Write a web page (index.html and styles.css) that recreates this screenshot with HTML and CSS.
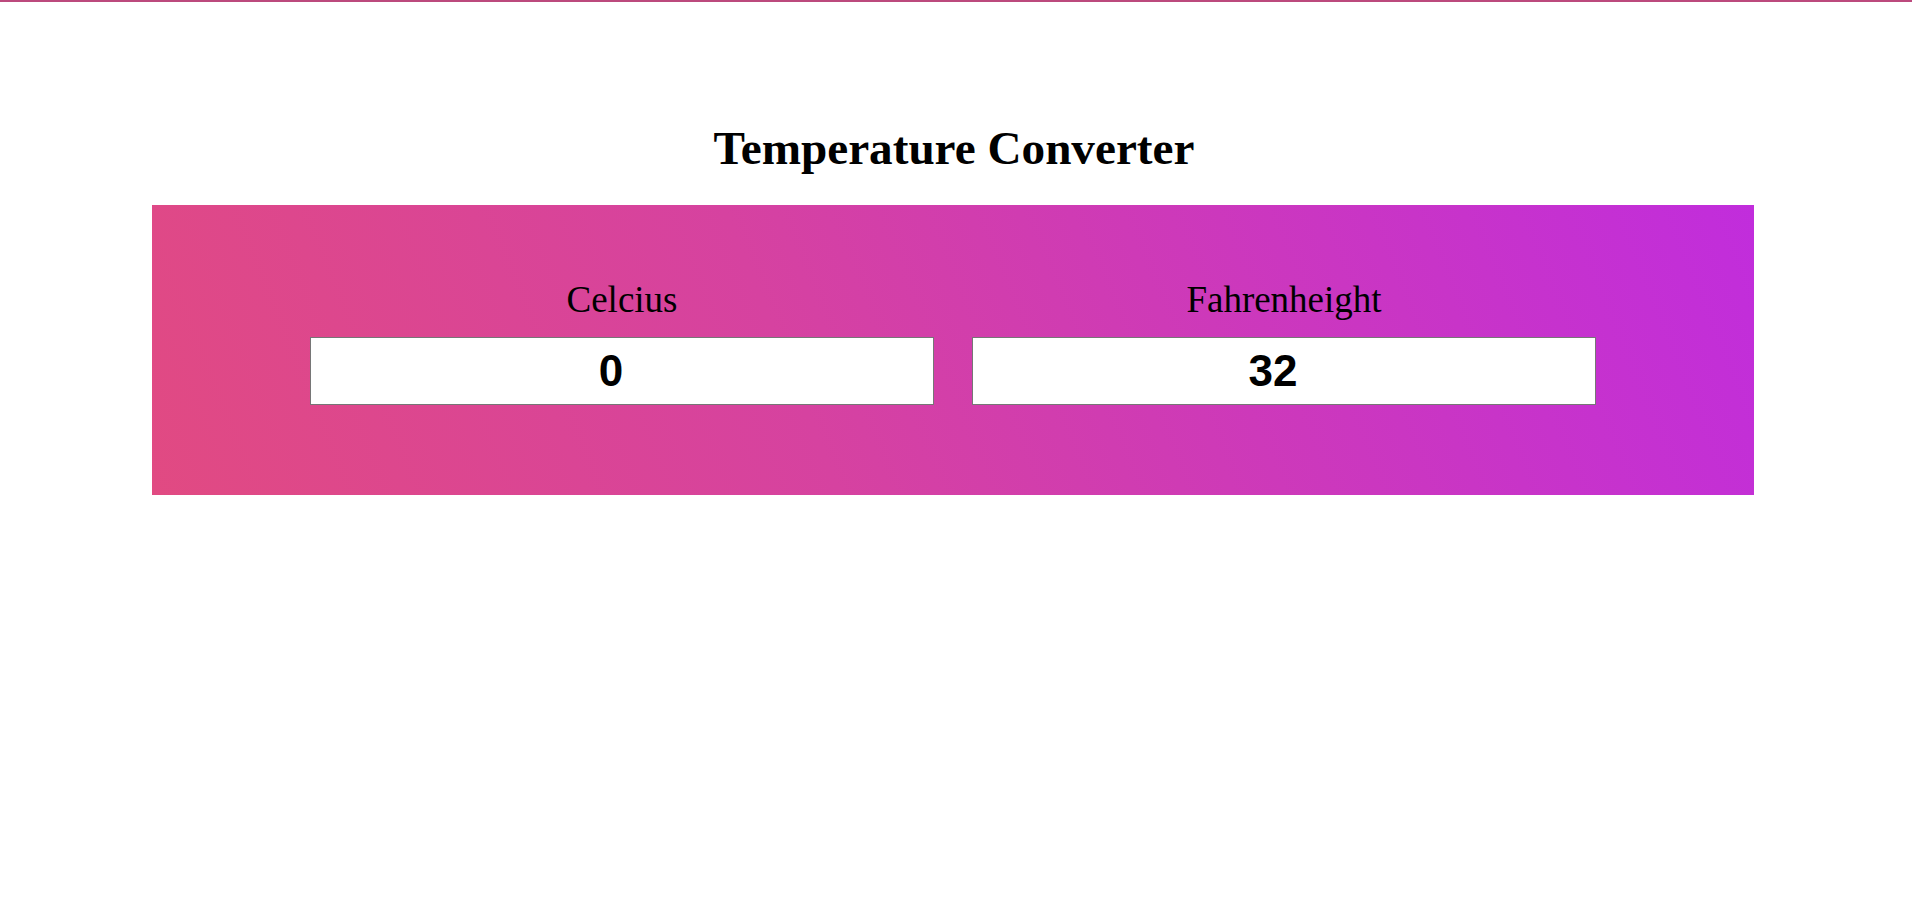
FILE: index.html
```html
<!DOCTYPE html>
<html lang="en">
<head>
<meta charset="utf-8">
<title>Temperature Converter</title>
<link rel="stylesheet" href="styles.css">
</head>
<body>
<div class="topline"></div>
<h1 class="title">Temperature Converter</h1>
<section class="panel">
  <div class="field">
    <label class="label" for="c">Celcius</label>
    <input class="value" id="c" type="number" value="0">
  </div>
  <div class="field">
    <label class="label" for="f">Fahrenheight</label>
    <input class="value" id="f" type="number" value="32">
  </div>
</section>
</body>
</html>
```
FILE: styles.css
```css
html, body {
  margin: 0;
  padding: 0;
  background: #ffffff;
}

body {
  font-family: "Liberation Serif", "Times New Roman", serif;
  color: #000000;
}

.topline {
  height: 2px;
  background: #bc4a7d;
}

.title {
  margin: 119px 0 0 0;
  padding-right: 4px;
  font-size: 47.2px;
  line-height: 54px;
  font-weight: bold;
  text-align: center;
}

.panel {
  margin: 30px 158px 0 152px;
  height: 290px;
  box-sizing: border-box;
  padding: 73px 158px 0 158px;
  background: linear-gradient(68deg, #e14a82 0%, #d642a0 40%, #c12ddc 100%);
  display: grid;
  grid-template-columns: 1fr 1fr;
  column-gap: 38px;
  align-content: start;
}

.field {
  display: flex;
  flex-direction: column;
  gap: 16px;
}

.label {
  font-family: "Liberation Serif", "Times New Roman", serif;
  font-size: 37px;
  line-height: 43px;
  text-align: center;
}

.value {
  display: block;
  box-sizing: border-box;
  width: 100%;
  height: 68px;
  margin: 0;
  padding: 0 9px 0 2px;
  border: 1px solid #767676;
  background: #ffffff;
  font-family: "Liberation Sans", Arial, sans-serif;
  font-weight: bold;
  font-size: 44px;
  color: #000000;
  text-align: center;
}
```
